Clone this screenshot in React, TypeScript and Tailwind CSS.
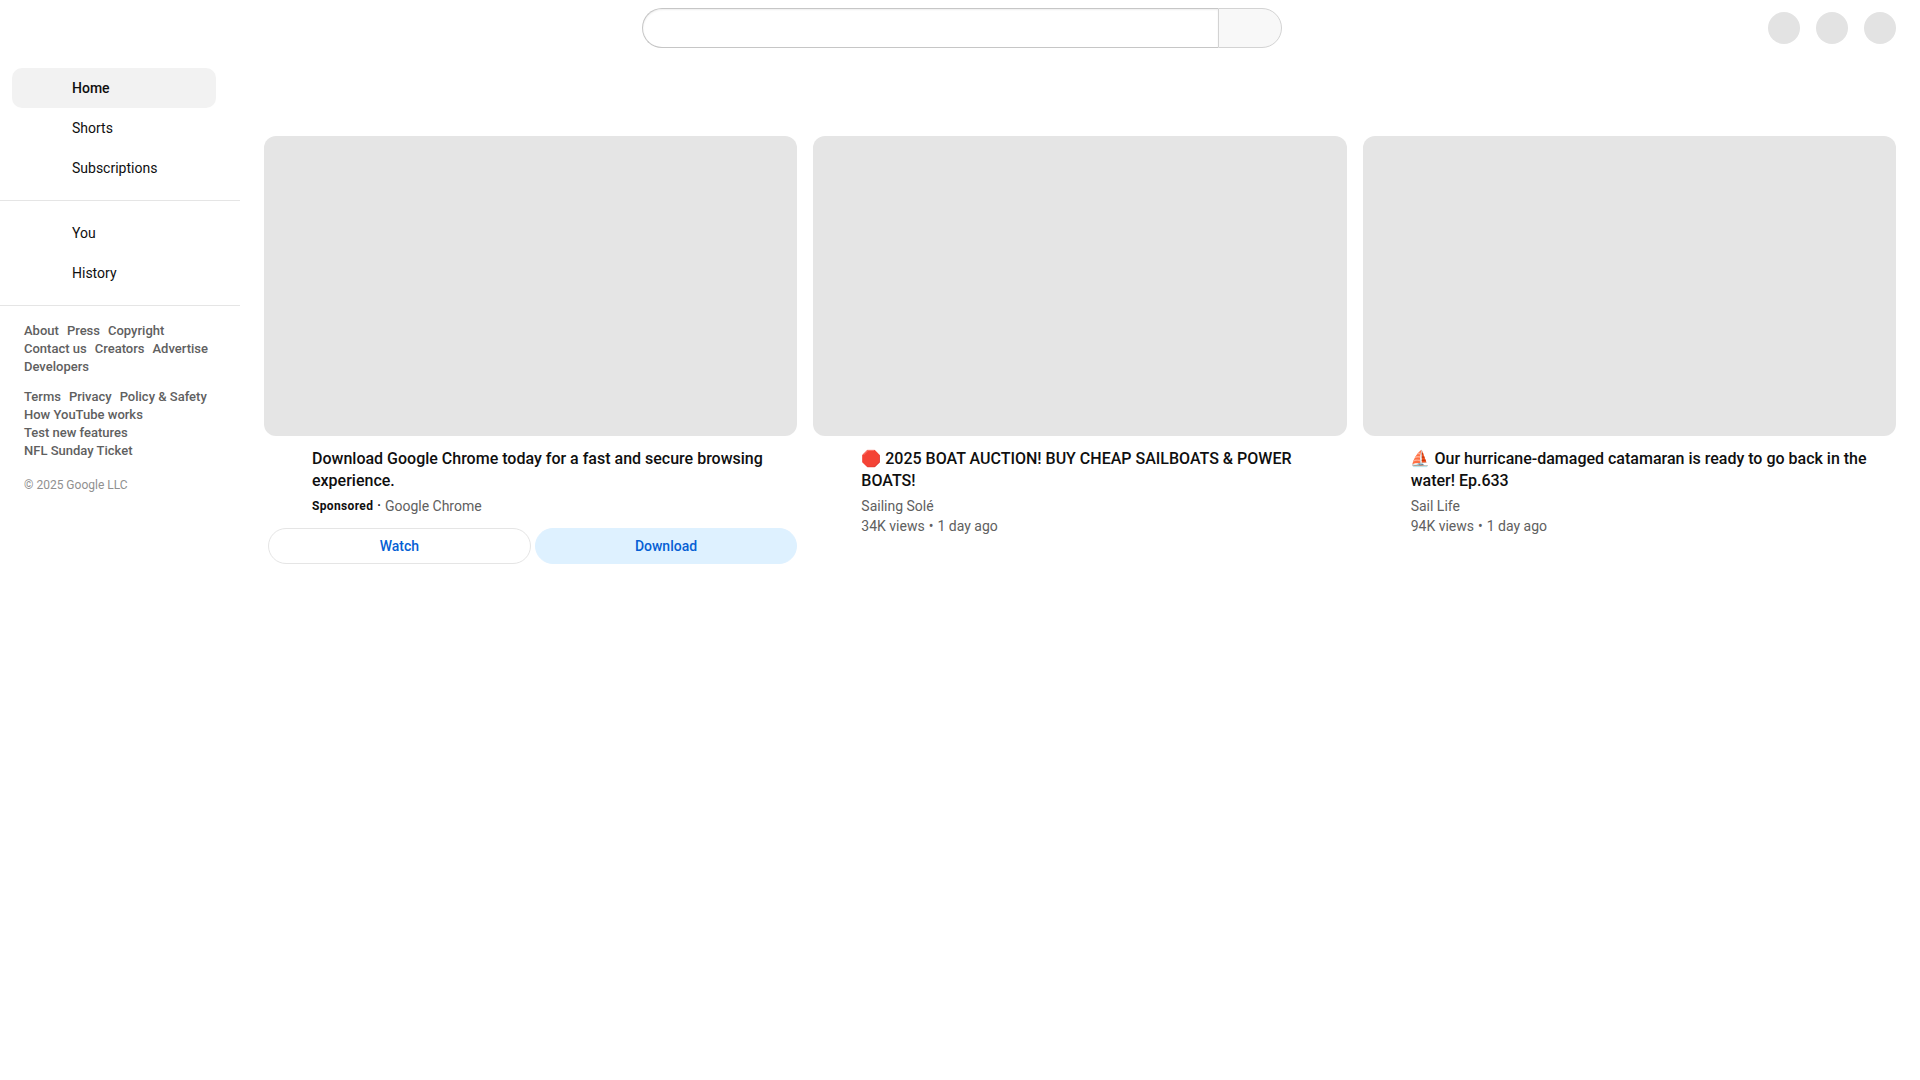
import React from "react";

const footerOne = [["About", "Press", "Copyright"], ["Contact us", "Creators", "Advertise"], ["Developers"]];
const footerTwo = [["Terms", "Privacy", "Policy & Safety"], ["How YouTube works"], ["Test new features"], ["NFL Sunday Ticket"]];

function NavItem({ label, active = false }: { label: string; active?: boolean }) {
  return (
    <a className={`flex h-10 w-[204px] items-center rounded-[10px] pl-[60px] text-[14px] leading-5 ${active ? "bg-[#f2f2f2] font-medium" : ""}`}>
      {label}
    </a>
  );
}

function FooterLinks({ rows }: { rows: string[][] }) {
  return (
    <div className="flex flex-col px-6 pt-3 text-[13px] font-medium leading-[18px] text-[#606060]">
      {rows.map((row) => (
        <div key={row[0]} className="flex gap-2 whitespace-nowrap">
          {row.map((l) => <a key={l}>{l}</a>)}
        </div>
      ))}
    </div>
  );
}

function Card({ title, children }: { title: string; children: React.ReactNode }) {
  return (
    <article className="min-w-0 flex-1">
      <div className="h-[300px] rounded-xl bg-[#e5e5e5]" />
      <div className="pl-12 pr-6 pt-3">
        <h3 className="text-[16px] font-medium leading-[22px]">{title}</h3>
      </div>
      {children}
    </article>
  );
}

function Meta({ channel, views }: { channel: string; views: string }) {
  return (
    <div className="pl-12 pt-1 text-[14px] leading-5 text-[#606060]">
      <div>{channel}</div>
      <div className="flex">
        <span>{views} views</span>
        <span className="px-1">•</span>
        <span>1 day ago</span>
      </div>
    </div>
  );
}

export default function App() {
  return (
    <div className="h-screen w-full overflow-hidden bg-white font-['Roboto','Noto_Color_Emoji',sans-serif] text-[#0f0f0f] antialiased">
      <header className="flex h-14 items-center">
        <div className="ml-[642px] flex h-10 w-[640px]">
          <div className="w-[576px] rounded-l-full border border-r-0 border-[#c6c6c6] shadow-[inset_0_1px_2px_#eee]" />
          <div className="w-16 rounded-r-full border border-[#d3d3d3] bg-[#f8f8f8]" />
        </div>
        <div className="ml-auto mr-6 flex gap-4">
          <div className="size-8 rounded-full bg-[#e3e3e3]" />
          <div className="size-8 rounded-full bg-[#e3e3e3]" />
          <div className="size-8 rounded-full bg-[#e3e3e3]" />
        </div>
      </header>
      <div className="flex">
        <aside className="w-60 shrink-0">
          <nav className="border-b border-[#e5e5e5] p-3">
            <NavItem label="Home" active />
            <NavItem label="Shorts" />
            <NavItem label="Subscriptions" />
          </nav>
          <nav className="border-b border-[#e5e5e5] p-3">
            <NavItem label="You" />
            <NavItem label="History" />
          </nav>
          <div className="pt-1">
            <FooterLinks rows={footerOne} />
            <FooterLinks rows={footerTwo} />
          </div>
          <div className="px-6 py-4 text-[12px] leading-[18px] text-[#909090]">© 2025 Google LLC</div>
        </aside>
        <main className="flex flex-1 gap-4 pl-6 pr-6 pt-20">
          <Card title="Download Google Chrome today for a fast and secure browsing experience.">
            <div className="flex items-center pl-12 pt-1 leading-5">
              <span className="text-[12px] font-bold tracking-[0.35px]">Sponsored</span>
              <span className="px-1 text-[12px] font-bold">·</span>
              <span className="text-[14px] text-[#606060]">Google Chrome</span>
            </div>
            <div className="flex gap-1 pl-1 pt-3 text-[14px] font-medium text-[#065fd4]">
              <button className="h-9 flex-1 rounded-full border border-[#e5e5e5]">Watch</button>
              <button className="h-9 flex-1 rounded-full border border-[#def1ff] bg-[#def1ff]">Download</button>
            </div>
          </Card>
          <Card title="🛑 2025 BOAT AUCTION! BUY CHEAP SAILBOATS & POWER BOATS!">
            <Meta channel="Sailing Solé" views="34K" />
          </Card>
          <Card title="⛵ Our hurricane-damaged catamaran is ready to go back in the water! Ep.633">
            <Meta channel="Sail Life" views="94K" />
          </Card>
        </main>
      </div>
    </div>
  );
}
